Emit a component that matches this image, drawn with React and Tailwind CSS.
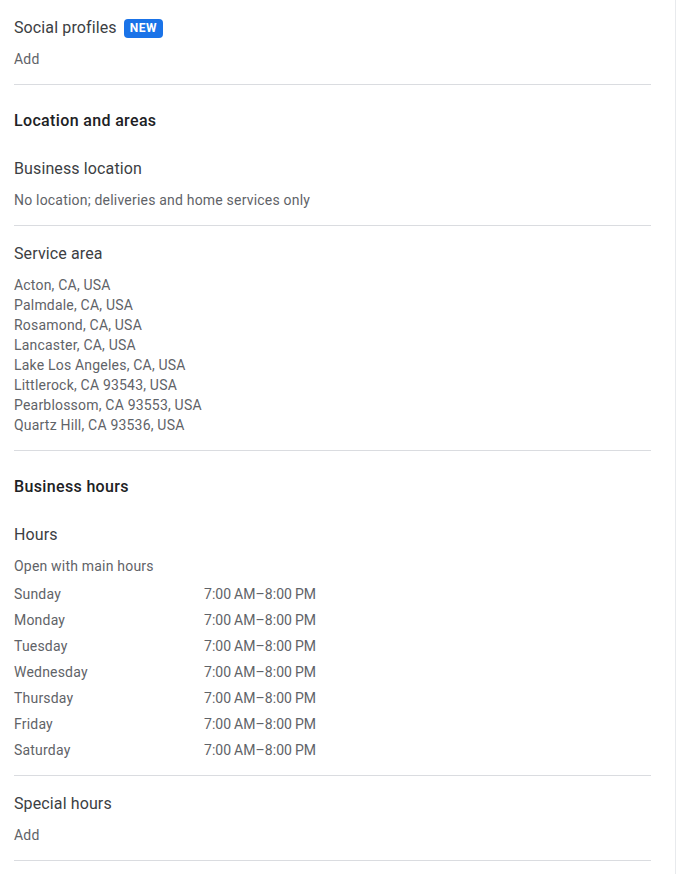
import React from "react";

const areas = [
  "Acton, CA, USA",
  "Palmdale, CA, USA",
  "Rosamond, CA, USA",
  "Lancaster, CA, USA",
  "Lake Los Angeles, CA, USA",
  "Littlerock, CA 93543, USA",
  "Pearblossom, CA 93553, USA",
  "Quartz Hill, CA 93536, USA",
];

const days = ["Sunday", "Monday", "Tuesday", "Wednesday", "Thursday", "Friday", "Saturday"];

function Divider() {
  return <div className="h-px bg-[#dadce0]" />;
}

function Title({ children }) {
  return <div className="text-[16px] leading-[24px] tracking-[0.12px] text-[#3c4043]">{children}</div>;
}

function Body({ children }) {
  return <div className="text-[14px] leading-[20px] tracking-[0.2px] text-[#5f6368]">{children}</div>;
}

function Header({ children }) {
  return <div className="text-[16px] leading-[24px] font-medium tracking-[0.35px] text-[#202124]">{children}</div>;
}

export default function App() {
  return (
    <div className="flex min-h-[874px] bg-white" style={{ fontFamily: "Roboto, 'Noto Sans', sans-serif" }}>
      <div className="w-[676px] shrink-0 border-r border-[#e8eaed]">
        <div className="w-[651px] pl-[14px]">
          <div className="pt-[16px]">
            <div className="flex items-center gap-[7px]">
              <Title>Social profiles</Title>
              <span className="rounded-[4px] bg-[#1a73e8] px-[6px] text-[12px] font-bold leading-[19px] tracking-[0.5px] text-white">NEW</span>
            </div>
            <div className="mt-[9px]"><Body>Add</Body></div>
          </div>
          <div className="mt-[15px]"><Divider /></div>

          <div className="mt-[24px]"><Header>Location and areas</Header></div>
          <div className="mt-[24px]"><Title>Business location</Title></div>
          <div className="mt-[9px]"><Body>No location; deliveries and home services only</Body></div>
          <div className="mt-[15px]"><Divider /></div>

          <div className="mt-[16px]"><Title>Service area</Title></div>
          <div className="mt-[9px]">
            {areas.map((a) => (
              <Body key={a}>{a}</Body>
            ))}
          </div>
          <div className="mt-[15px]"><Divider /></div>

          <div className="mt-[24px]"><Header>Business hours</Header></div>
          <div className="mt-[24px]"><Title>Hours</Title></div>
          <div className="mt-[9px]"><Body>Open with main hours</Body></div>
          <div className="mt-[5px]">
            {days.map((d) => (
              <div key={d} className="flex h-[26px] items-center text-[14px] tracking-[0.2px] text-[#5f6368]">
                <span className="w-[190px]">{d}</span>
                <span className="tracking-[0.05px]">7:00&#8201;AM–8:00&#8201;PM</span>
              </div>
            ))}
          </div>
          <div className="mt-[12px]"><Divider /></div>

          <div className="mt-[16px]"><Title>Special hours</Title></div>
          <div className="mt-[9px]"><Body>Add</Body></div>
          <div className="mt-[15px]"><Divider /></div>
        </div>
      </div>
      <div className="flex-1" />
    </div>
  );
}
